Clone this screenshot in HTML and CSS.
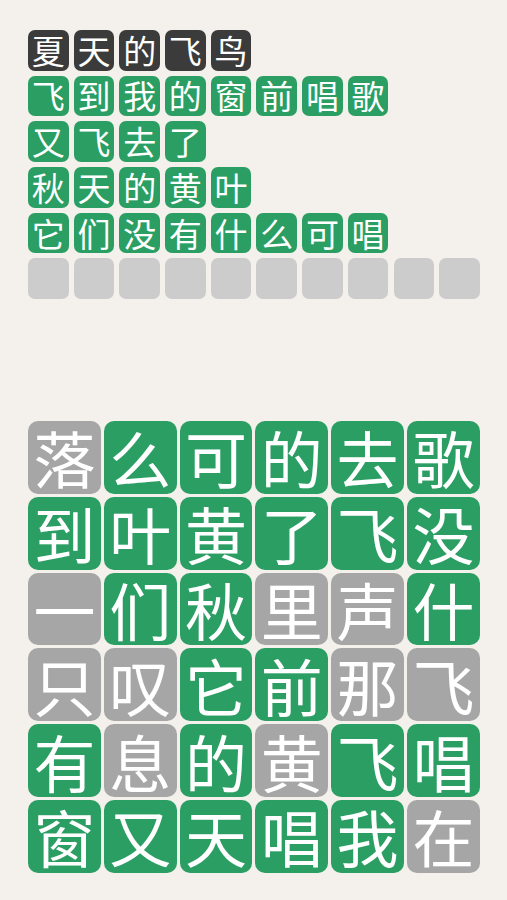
FILE: index.html
```html
<!DOCTYPE html>
<html lang="zh-CN">
<head>
    <meta charset="UTF-8">
    <meta name="viewport" content="width=device-width, initial-scale=1.0">
    <title>夏天的飞鸟</title>
    <link rel="stylesheet" href="styles.css">
</head>
<body>
    <div class="lines">
        <div class="line">
            <span class="cell title">夏</span><span class="cell title">天</span><span class="cell title">的</span><span class="cell title">飞</span><span class="cell title">鸟</span>
        </div>
        <div class="line">
            <span class="cell done">飞</span><span class="cell done">到</span><span class="cell done">我</span><span class="cell done">的</span><span class="cell done">窗</span><span class="cell done">前</span><span class="cell done">唱</span><span class="cell done">歌</span>
        </div>
        <div class="line">
            <span class="cell done">又</span><span class="cell done">飞</span><span class="cell done">去</span><span class="cell done">了</span>
        </div>
        <div class="line">
            <span class="cell done">秋</span><span class="cell done">天</span><span class="cell done">的</span><span class="cell done">黄</span><span class="cell done">叶</span>
        </div>
        <div class="line">
            <span class="cell done">它</span><span class="cell done">们</span><span class="cell done">没</span><span class="cell done">有</span><span class="cell done">什</span><span class="cell done">么</span><span class="cell done">可</span><span class="cell done">唱</span>
        </div>
        <div class="line">
            <span class="cell empty"></span><span class="cell empty"></span><span class="cell empty"></span><span class="cell empty"></span><span class="cell empty"></span><span class="cell empty"></span><span class="cell empty"></span><span class="cell empty"></span><span class="cell empty"></span><span class="cell empty"></span>
        </div>
    </div>

    <div class="board">
        <span class="tile off">落</span><span class="tile on">么</span><span class="tile on">可</span><span class="tile on">的</span><span class="tile on">去</span><span class="tile on">歌</span>
        <span class="tile on">到</span><span class="tile on">叶</span><span class="tile on">黄</span><span class="tile on">了</span><span class="tile on">飞</span><span class="tile on">没</span>
        <span class="tile off">一</span><span class="tile on">们</span><span class="tile on">秋</span><span class="tile off">里</span><span class="tile off">声</span><span class="tile on">什</span>
        <span class="tile off">只</span><span class="tile off">叹</span><span class="tile on">它</span><span class="tile on">前</span><span class="tile off">那</span><span class="tile off">飞</span>
        <span class="tile on">有</span><span class="tile off">息</span><span class="tile on">的</span><span class="tile off">黄</span><span class="tile on">飞</span><span class="tile on">唱</span>
        <span class="tile on">窗</span><span class="tile on">又</span><span class="tile on">天</span><span class="tile on">唱</span><span class="tile on">我</span><span class="tile off">在</span>
    </div>
</body>
</html>
```

FILE: styles.css
```css
body {
    margin: 0;
    padding: 30px 27px 0 28px;
    background-color: #f4f0eb;
    font-family: "Noto Sans CJK SC", "Noto Sans", sans-serif;
    font-weight: 400;
    color: #fff;
}
.lines {
    display: flex;
    flex-direction: column;
    gap: 5.2px;
}
.line {
    display: flex;
    gap: 5.2px;
    height: 40.5px;
}
.cell {
    width: 40.5px;
    height: 40.5px;
    border-radius: 7px;
    display: flex;
    align-items: center;
    justify-content: center;
    font-size: 33px;
    line-height: 1;
}
.title {
    background-color: #3b3b3b;
}
.done {
    background-color: #2a9e63;
}
.empty {
    background-color: #cccccc;
}
.board {
    margin-top: 122px;
    display: grid;
    grid-template-columns: repeat(6, 72.8px);
    grid-auto-rows: 72.8px;
    gap: 3px;
}
.tile {
    border-radius: 10px;
    display: flex;
    align-items: center;
    justify-content: center;
    font-size: 62px;
    line-height: 1;
}
.on {
    background-color: #2a9e63;
}
.off {
    background-color: #a6a6a6;
}
```
